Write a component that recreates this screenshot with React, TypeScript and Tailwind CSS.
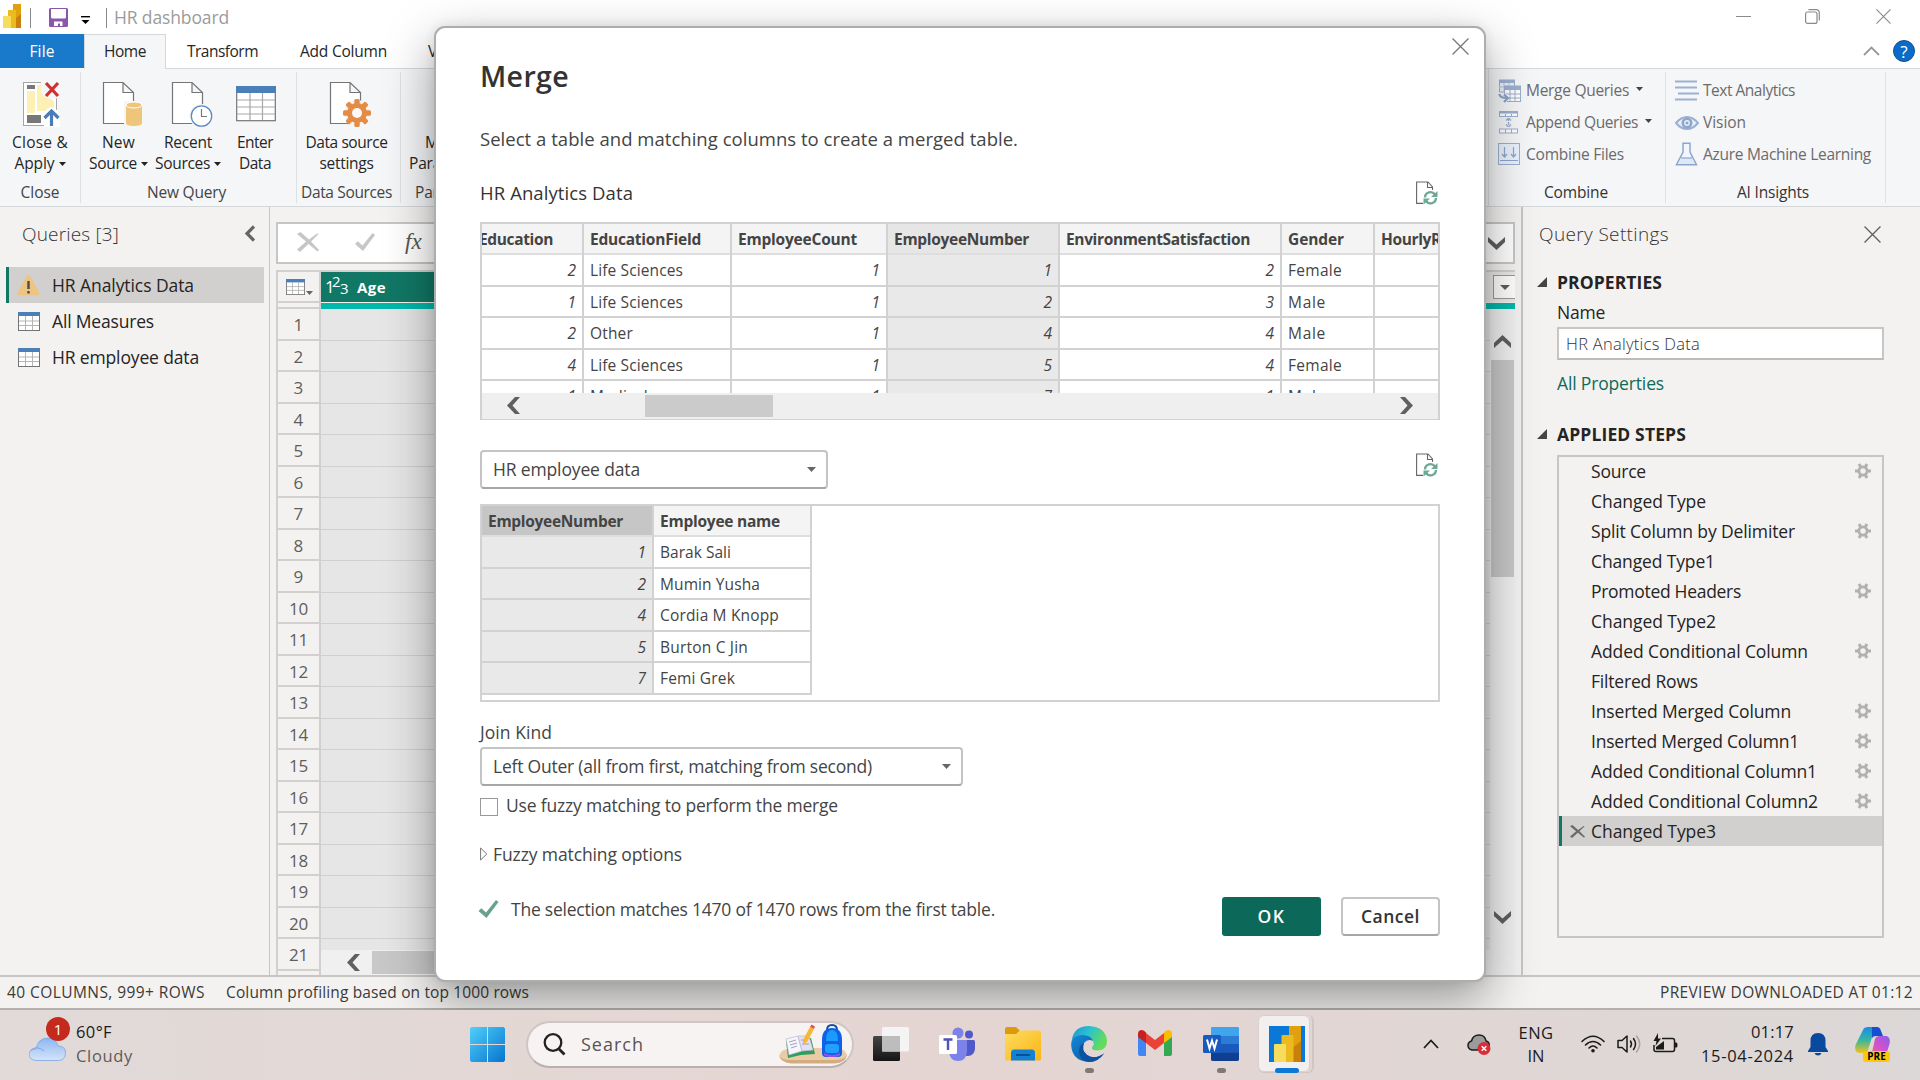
import React, { useLayoutEffect, useRef, useState } from "react";

/* Single-line label spaced out (or in) to fill a given width. */
function T({ w, className = "", children }: { w: number; className?: string; children: string }) {
  const ref = useRef<HTMLSpanElement>(null);
  const [spacing, setSpacing] = useState(0);
  useLayoutEffect(() => {
    if (ref.current) {
      setSpacing((w - ref.current.getBoundingClientRect().width) / children.length);
    }
  }, []);
  return (
    <span className={"block shrink-0 whitespace-nowrap " + className} style={{ width: w }}>
      <span ref={ref} className="inline-block" style={{ letterSpacing: spacing }}>
        {children}
      </span>
    </span>
  );
}

/* ---------- icons ---------- */

function PowerBiLogo({ className }: { className: string }) {
  return (
    <svg className={className} viewBox="0 0 18 24" preserveAspectRatio="none">
      <rect x="10" y="0" width="8" height="24" rx="0.6" fill="#c97f0a" />
      <path d="M10 0.600Q10 0 10.600 0H17.400Q18 0 18 0.600V10L13 14H10Z" fill="#e0a010" />
      <rect x="5" y="6" width="8" height="18" rx="0.6" fill="#ecb91e" />
      <rect x="0" y="12" width="8" height="12" rx="0.6" fill="#f8dc5c" />
    </svg>
  );
}

function SaveIcon() {
  return (
    <svg className="h-[19px] w-[19px]" viewBox="0 0 19 19">
      <path d="M0 1.5Q0 0 1.5 0H17.500Q19 0 19 1.500V17.500Q19 19 17.500 19H1.500Q0 19 0 17.500Z" fill="#8a56ac" />
      <path d="M2 1H17V9Q17 10.500 15.500 10.500H3.500Q2 10.500 2 9Z" fill="#fff" />
      <path d="M5 13.500H13.500V18H11V15.500H9V18H5Z" fill="#fff" />
    </svg>
  );
}

function Caret({ className = "text-[#222]" }: { className?: string }) {
  return (
    <svg className={"h-[4px] w-[7px] shrink-0 " + className} viewBox="0 0 7 4">
      <path d="M0 0H7L3.500 4Z" fill="currentColor" />
    </svg>
  );
}

function CloseApplyIcon() {
  return (
    <svg className="h-[46px] w-[40px]" viewBox="0 0 40 46">
      <rect x="3.500" y="1.500" width="33" height="43" fill="#fff" stroke="#a6a6a6" />
      <rect x="7" y="4" width="8" height="4" fill="#777" />
      <rect x="7" y="10" width="8" height="22" fill="#fdf0b4" />
      <rect x="7" y="34" width="14" height="8" fill="#777" />
      <path d="M17 4H25V14L34 20V30H17Z" fill="#fdf0b4" />
      <path d="M21 0H40V16Q32 20 25 16L21 12Z" fill="#f5f6f8" />
      <path d="M24 38Q24 28 31 26Q38 28 40 34V46H24Z" fill="#fff" />
      <path d="M26 2L38 15M38 2L26 15" stroke="#cf3030" strokeWidth="3.200" />
      <path d="M31.500 45V30M24.500 37L31.500 30L38.500 37" stroke="#4a7db8" strokeWidth="3.200" fill="none" />
    </svg>
  );
}

function Page() {
  return <path d="M1.500 1.500H21L31.500 11.500V42.500H1.500Z M21 1.500V11.500H31.500" fill="#fff" stroke="#757575" strokeWidth="1.200" />;
}

function NewSourceIcon() {
  return (
    <svg className="h-[46px] w-[42px]" viewBox="0 0 42 46">
      <Page />
      <path d="M22 20H42V45H22Z" fill="#f5f6f8" />
      <path d="M24 24V42Q24 45 32 45T40 42V24Z" fill="#eec579" />
      <ellipse cx="32" cy="24" rx="8" ry="3" fill="#eec579" stroke="#fff" strokeWidth="1" />
    </svg>
  );
}

function RecentIcon() {
  return (
    <svg className="h-[47px] w-[42px]" viewBox="0 0 42 47">
      <Page />
      <circle cx="30.500" cy="35" r="12" fill="#f5f6f8" />
      <circle cx="30.500" cy="35" r="10.200" fill="#fff" stroke="#5a8cc4" strokeWidth="1.300" />
      <path d="M30.500 28V35.500H36" stroke="#777" strokeWidth="1.200" fill="none" />
    </svg>
  );
}

function EnterDataIcon() {
  return (
    <svg className="h-[36px] w-[40px]" viewBox="0 0 40 36">
      <rect x="0.700" y="0.700" width="38.600" height="34" fill="#fff" stroke="#757575" strokeWidth="1.200" />
      <rect width="40" height="7" fill="#4a7fb8" />
      <path d="M1 14H39M1 21H39M1 28H39M14 7V34M26.500 7V34" stroke="#a8a8a8" strokeWidth="1.200" />
    </svg>
  );
}

function DataSourceIcon() {
  return (
    <svg className="h-[47px] w-[42px]" viewBox="0 0 42 47">
      <Page />
      <circle cx="28" cy="32" r="13" fill="#f5f6f8" />
      <g fill="#e58c44">
        {[0, 45, 90, 135].map((a) => (
          <rect key={a} x="25.300" y="18" width="5.400" height="28" rx="1.500" transform={`rotate(${a} 28 32)`} />
        ))}
        <circle cx="28" cy="32" r="10" />
      </g>
      <circle cx="28" cy="32" r="5" fill="#f9f9f9" />
    </svg>
  );
}

function MergeQueriesIcon() {
  return (
    <svg className="h-[24px] w-[23px]" viewBox="0 0 23 24">
      <path d="M1.500 1.500H16.500V13H1.500Z" fill="#e8f0fa" stroke="#9cb0cf" />
      <rect x="1" y="0.500" width="16" height="3.500" fill="#9cb0cf" />
      <path d="M1 8H7M6 4V13M11 4V8" stroke="#b9c8df" />
      <rect x="6.500" y="7" width="16" height="15.500" fill="#fff" stroke="#9cb0cf" />
      <rect x="6" y="7" width="17" height="4" fill="#9cb0cf" />
      <path d="M7 15H22M7 19H22M12 11V22M17 11V22" stroke="#9cb0cf" />
      <path d="M0 14L9 15V24H0Z" fill="#f2f4f6" />
      <path d="M1.500 15Q1.500 19 9 19M6 15.500L10 19L6 23" stroke="#8ba3c9" strokeWidth="2.200" fill="none" />
    </svg>
  );
}

function AppendQueriesIcon() {
  return (
    <svg className="ml-px h-[23px] w-[20px]" viewBox="0 0 20 23">
      <rect x="0.500" y="1" width="18" height="4.500" fill="#fff" stroke="#9cb0cf" />
      <rect x="0" y="0" width="19" height="2.500" fill="#9cb0cf" />
      <rect x="0.500" y="18" width="18" height="4" fill="#fff" stroke="#9cb0cf" />
      <path d="M6.500 3V5M12.500 3V5M6.500 18V22M12.500 18V22" stroke="#9cb0cf" />
      <path d="M9.500 7V16M7 9.500L9.500 7L12 9.500M7 13.500L9.500 16L12 13.500" stroke="#9cb0cf" strokeWidth="1.400" fill="none" strokeDasharray="3 1" />
    </svg>
  );
}

function CombineFilesIcon() {
  return (
    <svg className="h-[22px] w-[22px]" viewBox="0 0 22 22">
      <rect x="0.500" y="0.500" width="21" height="21" fill="#eaf2fd" stroke="#9cb0cf" />
      <path d="M6.500 4V14M4 11L6.500 14L9 11M15.500 4V14M13 11L15.500 14L18 11M2 17.500H20" stroke="#8fa6cb" strokeWidth="1.200" fill="none" />
    </svg>
  );
}

function TextLinesIcon() {
  return (
    <svg className="h-[22px] w-[24px]" viewBox="0 0 24 22">
      <path d="M0 1.500H22M0 7.500H22M3 13.500H24M0 19.500H22" stroke="#9cb0cf" strokeWidth="1.800" />
    </svg>
  );
}

function EyeIcon() {
  return (
    <svg className="h-[14px] w-[24px]" viewBox="0 0 24 14">
      <path d="M1 7Q6 1 12 1T23 7Q18 13 12 13T1 7Z" fill="#e6effa" stroke="#9cb0cf" strokeWidth="2" />
      <circle cx="12" cy="7" r="5.500" fill="#8fa6cb" />
      <circle cx="12" cy="7" r="2.900" fill="#e6effa" />
      <circle cx="12" cy="7" r="1.500" fill="#8fa6cb" />
    </svg>
  );
}

function FlaskIcon() {
  return (
    <svg className="h-[24px] w-[23px]" viewBox="0 0 23 24">
      <path d="M8 1.200H15V10L21.500 22.800H1.500L8 10Z" fill="#f1f6fd" stroke="#8fa6cb" strokeWidth="1.500" />
      <path d="M6 16H17L20 22H3Z" fill="#dde9f8" />
      <path d="M6 16H17" stroke="#8fa6cb" strokeWidth="1.200" />
    </svg>
  );
}

function TableIcon({ className = "h-[19px] w-[22px]" }: { className?: string }) {
  return (
    <svg className={"shrink-0 " + className} viewBox="0 0 22 19" preserveAspectRatio="none">
      <rect x="0.500" y="0.500" width="21" height="18" fill="#fff" stroke="#737373" />
      <path d="M1 9H21M1 13.500H21M7.500 4V18M14.500 4V18" stroke="#b5b5b5" />
      <rect width="22" height="4" fill="#4a7fb8" />
    </svg>
  );
}

function WarningIcon() {
  return (
    <svg className="h-[21px] w-[23px] shrink-0" viewBox="0 0 23 21">
      <path d="M9.500 1.500Q11.500 -1 13.500 1.500L22.500 18Q23 20.500 21 20.500H2Q0 20.500 0.500 18Z" fill="#edc481" />
      <path d="M11.500 6V14M11.500 16V18.500" stroke="#4c4c4c" strokeWidth="2.400" />
    </svg>
  );
}

/* Heavy angular chevron used by the scroll bars, drawn pointing left. */
function Chevron({ className = "" }: { className?: string }) {
  return (
    <svg className={"h-[17px] w-[13px] shrink-0 text-[#606060] " + className} viewBox="0 0 13 17">
      <path d="M8 0H13L5.500 8.500L13 17H8L0 8.500Z" fill="currentColor" />
    </svg>
  );
}

function ThinX({ className }: { className: string }) {
  return (
    <svg className={className} viewBox="0 0 16 16">
      <path d="M0.500 0.500L15.500 15.500M15.500 0.500L0.500 15.500" stroke="currentColor" strokeWidth="1.200" fill="none" />
    </svg>
  );
}

function BrushX({ className }: { className: string }) {
  return (
    <svg className={className} viewBox="0 0 22 20" preserveAspectRatio="none">
      <path d="M0 2L3.500 0L12 7.500L20 1.500L21.500 2L14 9.500L22 18L20.500 19.500L11.500 12L3 20L0 17.500L9 9.500Z" fill="currentColor" />
    </svg>
  );
}

function CheckMark({ className }: { className: string }) {
  return (
    <svg className={className} viewBox="0 0 20 18">
      <path d="M0 11L2.800 8.200L7.500 12.500L17.500 0L20 2L8 18Z" fill="currentColor" />
    </svg>
  );
}

function GearIcon() {
  return (
    <svg className="h-[16px] w-[16px] shrink-0" viewBox="0 0 16 16">
      <g fill="#b3b1af">
        {[0, 60, 120].map((a) => (
          <rect key={a} x="0" y="6.500" width="16" height="3" transform={`rotate(${a} 8 8)`} />
        ))}
        <circle cx="8" cy="8" r="5.500" />
      </g>
      <circle cx="8" cy="8" r="2.700" fill="#f3f2f1" />
    </svg>
  );
}

function RefreshPageIcon() {
  return (
    <svg className="h-[24px] w-[22px]" viewBox="0 0 22 24">
      <path d="M0.600 1H12L16.500 6V22H0.600Z" fill="#fff" />
      <path d="M7 22.400H0.600V1H12L16.500 6V9M11.500 1V6.500H16.500" fill="none" stroke="#666" strokeWidth="1.100" />
      <circle cx="14.500" cy="16.800" r="7.300" fill="#fff" />
      <path d="M9 16.500A5.500 5.500 0 0 1 19 13.500M20 17A5.500 5.500 0 0 1 10 20" fill="none" stroke="#6fa894" strokeWidth="2.400" />
      <path d="M21.500 10V16H15ZM7.500 23.500V17.500H14Z" fill="#6fa894" />
    </svg>
  );
}

/* ---------- ribbon ---------- */

function BigButton({ className, icon, children }: { className: string; icon: React.ReactNode; children: React.ReactNode }) {
  return (
    <div className={"flex shrink-0 flex-col items-center " + className}>
      <div className="mb-[3px] flex h-[50px] items-center justify-center">{icon}</div>
      {children}
    </div>
  );
}

function Line({ children }: { children: React.ReactNode }) {
  return <div className="flex h-[21px] items-center justify-center gap-[4px]">{children}</div>;
}

function SmallItem({ icon, w, text, caret }: { icon: React.ReactNode; w: number; text: string; caret?: boolean }) {
  return (
    <div className="flex h-[32px] items-center">
      <div className="flex w-[28px] shrink-0 items-center">{icon}</div>
      <T w={w} className="text-[#6b6b6b]">{text}</T>
      {caret && <Caret className="-mt-[3px] ml-[7px] text-[#444]" />}
    </div>
  );
}

function Ribbon() {
  return (
    <div className="flex h-[138px] border-b border-[#d5d8db] bg-[#f5f6f8] text-[15.5px] leading-[21px] text-[#262626]">
      <div className="my-[3px] flex w-[81px] flex-col items-center border-r border-[#dfe0e2] pt-[7px]">
        <BigButton className="pl-0" icon={<CloseApplyIcon />}>
          <Line><T w={56}>Close &amp;</T></Line>
          <Line><T w={40}>Apply</T><Caret /></Line>
        </BigButton>
        <div className="mt-[8px]"><T w={39} className="text-[#444]">Close</T></div>
      </div>
      <div className="my-[3px] w-[216px] border-r border-[#dfe0e2] pt-[7px]">
        <div className="flex">
          <BigButton className="ml-[8px] w-[59px]" icon={<div className="pl-[9px]"><NewSourceIcon /></div>}>
            <Line><T w={33}>New</T></Line>
            <Line><T w={48}>Source</T><Caret /></Line>
          </BigButton>
          <BigButton className="ml-[7px] w-[66px]" icon={<div className="pl-[8px]"><RecentIcon /></div>}>
            <Line><T w={48}>Recent</T></Line>
            <Line><T w={55}>Sources</T><Caret /></Line>
          </BigButton>
          <BigButton className="ml-[15px] w-[40px]" icon={<EnterDataIcon />}>
            <div className="-ml-[2px]">
              <Line><T w={36}>Enter</T></Line>
              <Line><T w={32}>Data</T></Line>
            </div>
          </BigButton>
        </div>
        <div className="mt-[8px] pl-[66px]"><T w={79} className="text-[#444]">New Query</T></div>
      </div>
      <div className="my-[3px] flex w-[104px] flex-col items-center border-r border-[#dfe0e2] pt-[7px] pr-[4px]">
        <BigButton className="w-[84px]" icon={<div className="pl-[7px]"><DataSourceIcon /></div>}>
          <Line><T w={82}>Data source</T></Line>
          <Line><T w={54}>settings</T></Line>
        </BigButton>
        <div className="mt-[8px]"><T w={91} className="text-[#444]">Data Sources</T></div>
      </div>
      <div className="flex w-[1088px] flex-col border-r border-[#dfe0e2] pt-[10px]">
        <div className="h-[53px]" />
        <div className="pl-[24px]"><T w={56}>Manage</T></div>
        <div className="pl-[8px]"><T w={82}>Parameters</T></div>
        <div className="mt-[8px] pl-[14px]"><T w={82} className="text-[#444]">Parameters</T></div>
      </div>
      <div className="my-[3px] flex w-[177px] flex-col border-r border-[#dfe0e2] pt-[3px] pl-[9px]">
        <SmallItem icon={<MergeQueriesIcon />} w={103} text="Merge Queries" caret />
        <SmallItem icon={<AppendQueriesIcon />} w={112} text="Append Queries" caret />
        <SmallItem icon={<CombineFilesIcon />} w={98} text="Combine Files" />
        <div className="mt-[12px] pl-[46px]"><T w={64} className="text-[#333]">Combine</T></div>
      </div>
      <div className="my-[3px] flex w-[220px] flex-col border-r border-[#dfe0e2] pt-[3px] pl-[9px]">
        <SmallItem icon={<TextLinesIcon />} w={92} text="Text Analytics" />
        <SmallItem icon={<EyeIcon />} w={43} text="Vision" />
        <SmallItem icon={<FlaskIcon />} w={168} text="Azure Machine Learning" />
        <div className="mt-[12px] pl-[62px]"><T w={72} className="text-[#333]">AI Insights</T></div>
      </div>
    </div>
  );
}

function TitleBar() {
  return (
    <div className="flex h-[34px] shrink-0 items-start bg-white">
      <PowerBiLogo className="mt-[4px] ml-[3px] h-[24px] w-[18px]" />
      <div className="mt-[8px] ml-[9px] h-[20px] w-px bg-[#8a8a8a]" />
      <div className="mt-[8px] ml-[18px]"><SaveIcon /></div>
      <svg className="mt-[16px] ml-[13px] h-[8px] w-[9px]" viewBox="0 0 9 8">
        <path d="M0 0.700H9" stroke="#000" strokeWidth="1.400" />
        <path d="M0.500 4H8.500L4.500 8Z" />
      </svg>
      <div className="mt-[8px] ml-[16px] h-[20px] w-px bg-[#8a8a8a]" />
      <T w={115} className="mt-[4px] ml-[7px] text-[17.5px] leading-[27px] text-[#9b9b9b]">HR dashboard</T>
      <div className="grow" />
      <div className="mt-[16px] mr-[54px] h-px w-[15px] bg-[#8a8a8a]" />
      <svg className="mt-[9px] mr-[56px] h-[15px] w-[15px]" viewBox="0 0 15 15" fill="none" stroke="#8a8a8a" strokeWidth="1.200">
        <rect x="0.600" y="3" width="11.400" height="11.400" rx="2" />
        <path d="M3.500 0.700H11Q14.300 0.700 14.300 4V11.500" />
      </svg>
      <ThinX className="mt-[9px] mr-[29px] h-[15px] w-[15px] text-[#8a8a8a]" />
    </div>
  );
}

function TabBar() {
  return (
    <div className="flex h-[35px] shrink-0 bg-white text-[15.5px] leading-[35px] text-[#262626]">
      <div className="flex h-[34px] w-[84px] justify-center bg-[#1979ca] text-white"><T w={25}>File</T></div>
      <div className="flex w-[82px] justify-center border border-b-0 border-[#d5d8db] bg-[#f5f6f8] leading-[33px]"><T w={42}>Home</T></div>
      <div className="flex grow border-b border-[#d5d8db]">
        <T w={71} className="ml-[21px]">Transform</T>
        <T w={87} className="ml-[42px]">Add Column</T>
        <T w={34} className="ml-[41px]">View</T>
        <div className="grow" />
        <svg className="mt-[12px] mr-[13px] h-[10px] w-[17px]" viewBox="0 0 17 10" fill="none" stroke="#999" strokeWidth="1.800">
          <path d="M1 9L8.500 1.500L16 9" />
        </svg>
        <div className="mt-[6px] mr-[5px] flex h-[22px] w-[22px] items-center justify-center rounded-full border border-[#0f4f8f] bg-[#0a6bc8] text-[17px] text-white">?</div>
      </div>
    </div>
  );
}

/* ---------- panes ---------- */

function QueriesPane() {
  return (
    <div className="w-[270px] shrink-0 border-r border-[#c8c6c4] text-[17.5px] text-[#252423]">
      <div className="mb-[4px] flex h-[56px] items-center pl-[22px] text-[19px] font-light text-[#333]">
        <T w={97} className="-mt-px">Queries [3]</T>
        <svg className="-mt-[3px] ml-[125px] h-[17px] w-[11px]" viewBox="0 0 11 17"><path d="M10 1.500L3 8.500L10 15.500" fill="none" stroke="#666" strokeWidth="3.200" /></svg>
      </div>
      <div className="ml-[6px] flex h-[36px] w-[258px] items-center border-l-[3px] border-[#117865] bg-[#d2d0ce] pl-[8px]">
        <WarningIcon />
        <T w={142} className="ml-[12px]">HR Analytics Data</T>
      </div>
      <div className="flex h-[36px] items-center pl-[18px]">
        <TableIcon />
        <T w={102} className="ml-[12px]">All Measures</T>
      </div>
      <div className="flex h-[36px] items-center pl-[18px]">
        <TableIcon />
        <T w={147} className="ml-[12px]">HR employee data</T>
      </div>
    </div>
  );
}

const rowNumbers = Array.from({ length: 21 }, (_, i) => i + 1);

function DataGrid() {
  return (
    <div className="w-[1251px] shrink-0 overflow-hidden pt-[15px] pl-[6px]">
      <div className="flex h-[42px] w-[1239px] items-center border-2 border-[#c8c6c4] bg-white">
        <BrushX className="-mt-[2px] ml-[19px] h-[20px] w-[22px] text-[#c8c6c4]" />
        <CheckMark className="-mt-[2px] ml-[36px] h-[18px] w-[20px] text-[#c8c6c4]" />
        <span className="-mt-[2px] ml-[30px] font-['Liberation_Serif'] text-[23px] text-[#555] italic">fx</span>
        <div className="grow" />
        <Chevron className="mr-[10px] -rotate-90" />
      </div>
      <div className="mt-[6px] flex h-[705px] w-[1239px] border-t-2 border-[#d2d0ce]">
        <div className="w-[45px] shrink-0 border-x-2 border-[#d2d0ce] text-[17px] text-[#605e5c]">
          <div className="flex h-[31px] items-center border-b-2 border-[#d2d0ce] pl-[8px]">
            <TableIcon className="h-[16px] w-[19px]" />
            <Caret className="mt-[12px] ml-px text-[#666]" />
          </div>
          <div className="h-[6px] border-b-2 border-[#d2d0ce]" />
          {rowNumbers.map((n) => (
            <div key={n} className="flex h-[31px] items-center justify-center border-b-2 border-[#d2d0ce] pt-[2px] odd:h-[32px]">
              <T w={n < 10 ? 10 : 19}>{String(n)}</T>
            </div>
          ))}
        </div>
        <div className="w-[1194px]">
          <div className="flex h-[30px] items-center bg-[#117865] font-bold text-white">
            <div className="ml-[4px] flex text-[17px] leading-none font-normal">
              <T w={7}>1</T><T w={8} className="-mt-[4px] text-[15px]">2</T><T w={8} className="mt-[3px] text-[15px]">3</T>
            </div>
            <T w={29} className="ml-[9px] text-[15px]">Age</T>
            <div className="grow" />
            <div className="flex h-full w-[60px] items-center justify-end bg-[#eceae9]">
              <div className="flex h-[24px] w-[22px] items-center justify-center border border-r-0 border-[#9b9b9b] bg-white">
                <svg className="h-[5px] w-[10px]" viewBox="0 0 10 5"><path d="M0 0H10L5 5Z" fill="#605e5c" /></svg>
              </div>
            </div>
          </div>
          <div className="mt-px h-[6px] bg-[#01b8aa]" />
          <div className="flex h-[641px]">
            <div className="w-[1169px] overflow-hidden bg-[#e6e6e6]">
              {rowNumbers.map((n) => (
                <div key={n} className="h-[31px] border-b border-[#d2d0ce] odd:h-[32px]" />
              ))}
            </div>
            <div className="flex grow flex-col items-center bg-[#f0f0f0]">
              <Chevron className="mt-[24px] rotate-90" />
              <div className="mt-[10px] h-[217px] w-[23px] bg-[#c8c8c8]" />
              <div className="grow" />
              <Chevron className="mb-[24px] -rotate-90" />
            </div>
          </div>
          <div className="flex h-[25px] items-center bg-[#f0f0f0]">
            <Chevron className="ml-[26px]" />
            <div className="ml-[12px] h-[23px] w-[500px] bg-[#c8c8c8]" />
          </div>
        </div>
      </div>
    </div>
  );
}

const steps: { name: string; w: number; gear?: boolean; selected?: boolean }[] = [
  { name: "Source", w: 55, gear: true },
  { name: "Changed Type", w: 115 },
  { name: "Split Column by Delimiter", w: 204, gear: true },
  { name: "Changed Type1", w: 124 },
  { name: "Promoted Headers", w: 150, gear: true },
  { name: "Changed Type2", w: 125 },
  { name: "Added Conditional Column", w: 217, gear: true },
  { name: "Filtered Rows", w: 107 },
  { name: "Inserted Merged Column", w: 200, gear: true },
  { name: "Inserted Merged Column1", w: 208, gear: true },
  { name: "Added Conditional Column1", w: 226, gear: true },
  { name: "Added Conditional Column2", w: 227, gear: true },
  { name: "Changed Type3", w: 125, selected: true },
];

function SectionTitle({ w, children }: { w: number; children: string }) {
  return (
    <div className="flex h-[42px] items-center pl-[14px] font-bold">
      <svg className="mr-[10px] h-[10px] w-[10px]" viewBox="0 0 10 10"><path d="M10 0V10H0Z" fill="#444" /></svg>
      <T w={w}>{children}</T>
    </div>
  );
}

function SettingsPane() {
  return (
    <div className="grow border-l-2 border-[#c8c6c4] text-[17.5px] text-[#252423]">
      <div className="flex h-[54px] items-center pl-[16px] text-[19px] font-light text-[#333]">
        <T w={130}>Query Settings</T>
        <ThinX className="ml-[195px] h-[17px] w-[17px] text-[#605e5c]" />
      </div>
      <SectionTitle w={105}>PROPERTIES</SectionTitle>
      <div className="h-[18px] pl-[34px] leading-[18px]"><T w={48}>Name</T></div>
      <div className="mt-[6px] ml-[34px] flex h-[33px] w-[327px] items-center border-2 border-[#c8c6c4] border-b-[#bdbbb9] bg-white pt-[2px] pl-[7px] text-[16.500px] font-light text-[#333]">
        <T w={134}>HR Analytics Data</T>
      </div>
      <div className="flex h-[46px] items-center pl-[34px] text-[#0f6b58]"><T w={107}>All Properties</T></div>
      <div className="h-[7px]" />
      <SectionTitle w={129}>APPLIED STEPS</SectionTitle>
      <div className="ml-[34px] h-[483px] w-[327px] border-2 border-[#c8c6c4]">
        <div className="-mt-px">
          {steps.map((s) =>
            s.selected ? (
              <div key={s.name} className="flex h-[30px] items-center border-l-[3px] border-[#117865] bg-[#d2d0ce] pl-[8px]">
                <BrushX className="mr-[6px] h-[13px] w-[15px] text-[#6d6b69]" />
                <T w={s.w}>{s.name}</T>
              </div>
            ) : (
              <div key={s.name} className="flex h-[30px] items-center justify-between pr-[11px] pl-[32px]">
                <T w={s.w}>{s.name}</T>
                {s.gear && <div className="-mt-px"><GearIcon /></div>}
              </div>
            )
          )}
        </div>
      </div>
    </div>
  );
}

function StatusBar() {
  return (
    <div className="flex h-[35px] shrink-0 items-center border-y-2 border-t-[#c8c6c4] border-b-[#b3b0ae] bg-[#f3f2f1] pr-[7px] pl-[7px] text-[15.500px] text-[#3b3a39]">
      <T w={198}>40 COLUMNS, 999+ ROWS</T>
      <T w={303} className="ml-[21px]">Column profiling based on top 1000 rows</T>
      <div className="grow" />
      <T w={253}>PREVIEW DOWNLOADED AT 01:12</T>
    </div>
  );
}

/* ---------- merge dialog ---------- */

const rowHeights = ["h-[32px]", "h-[31px]", "h-[32px]", "h-[31px]", "h-[32px]"];

type Column = { title: string; titleWidth: number; width: string; numeric?: boolean; picked?: boolean; first?: boolean; last?: boolean; cells: string[]; cellWidths?: number[] };

const sourceColumns: Column[] = [
  { title: "Education", titleWidth: 74, width: "w-[102px]", numeric: true, first: true, cells: ["2", "1", "2", "4", "1"] },
  { title: "EducationField", titleWidth: 111, width: "w-[148px]", cells: ["Life Sciences", "Life Sciences", "Other", "Life Sciences", "Medical"], cellWidths: [93, 93, 43, 93, 58] },
  { title: "EmployeeCount", titleWidth: 119, width: "w-[156px]", numeric: true, cells: ["1", "1", "1", "1", "1"] },
  { title: "EmployeeNumber", titleWidth: 135, width: "w-[172px]", numeric: true, picked: true, cells: ["1", "2", "4", "5", "7"] },
  { title: "EnvironmentSatisfaction", titleWidth: 184, width: "w-[222px]", numeric: true, cells: ["2", "3", "4", "4", "1"] },
  { title: "Gender", titleWidth: 56, width: "w-[93px]", cells: ["Female", "Male", "Male", "Female", "Male"], cellWidths: [54, 38, 38, 54, 38] },
  { title: "HourlyRate", titleWidth: 84, width: "w-[63px]", last: true, cells: ["", "", "", "", ""] },
];

const lookupColumns: Column[] = [
  { title: "EmployeeNumber", titleWidth: 135, width: "w-[172px]", numeric: true, picked: true, cells: ["1", "2", "4", "5", "7"] },
  { title: "Employee name", titleWidth: 120, width: "w-[158px]", cells: ["Barak Sali", "Mumin Yusha", "Cordia M Knopp", "Burton C Jin", "Femi Grek"], cellWidths: [71, 100, 119, 88, 75] },
];

function PreviewColumn({ col, pickedHead }: { col: Column; pickedHead: string }) {
  return (
    <div className={"shrink-0 overflow-hidden border-[#d2d2d2] " + col.width + (col.last ? "" : " border-r-2") + (col.picked ? " bg-[#e9e9e9]" : " bg-white")}>
      <div className={"flex h-[31px] items-center border-b-2 border-[#dedede] pt-[2px] font-bold " + (col.first ? "-ml-[3px] " : "pl-[6px] ") + (col.picked ? pickedHead : "bg-[#f4f4f4]")}>
        <T w={col.titleWidth}>{col.title}</T>
      </div>
      {col.cells.map((c, i) => (
        <div key={i} className={"flex items-center border-b-2 border-[#d2d2d2] pt-[2px] " + rowHeights[i] + (col.numeric ? " justify-end pr-[6px] italic" : " pl-[6px]")}>
          {col.cellWidths ? <T w={col.cellWidths[i]}>{c}</T> : c}
        </div>
      ))}
    </div>
  );
}

function Select({ className, w, children }: { className: string; w: number; children: string }) {
  return (
    <div className={"flex h-[39px] items-center justify-between rounded-[4px] border-2 border-[#c4c4c4] border-b-[#a6a6a6] bg-white pr-[10px] pl-[11px] " + className}>
      <T w={w} className="-mt-px">{children}</T>
      <svg className="h-[5px] w-[9px]" viewBox="0 0 9 5"><path d="M0 0H9L4.500 5Z" fill="#666" /></svg>
    </div>
  );
}

function MergeDialog() {
  return (
    <div className="absolute top-[26px] left-[434px] h-[956px] w-[1052px] rounded-[11px] border-2 border-[#adadad] bg-white pt-[28px] pr-[44px] pl-[44px] text-[17.5px] text-[#444] shadow-[0_18px_50px_rgba(0,0,0,0.38),0_0_12px_rgba(0,0,0,0.08)]">
      <ThinX className="absolute top-[10px] right-[15px] h-[17px] w-[17px] text-[#777]" />
      <div className="h-[40px] text-[28.5px] leading-[41px] font-semibold text-[#333]"><T w={89}>Merge</T></div>
      <div className="mt-[29px] h-[28px] text-[18.5px] leading-[28px]"><T w={538}>Select a table and matching columns to create a merged table.</T></div>
      <div className="mt-[26px] flex h-[28px] items-center justify-between pr-[2px] text-[18.5px] text-[#333]">
        <T w={153}>HR Analytics Data</T>
        <div className="-mt-px"><RefreshPageIcon /></div>
      </div>
      <div className="mt-[15px] h-[198px] w-[960px] border-2 border-b border-[#d2d2d2] text-[15.5px]">
        <div className="flex h-[169px] overflow-hidden">
          {sourceColumns.map((c) => <PreviewColumn key={c.title} col={c} pickedHead="bg-[#e6e6e6]" />)}
        </div>
        <div className="flex h-[26px] items-center bg-[#efefef]">
          <Chevron className="-mt-px ml-[25px]" />
          <div className="ml-[125px] h-[22px] w-[128px] bg-[#cbcbcb]" />
          <div className="grow" />
          <Chevron className="-mt-px mr-[25px] rotate-180" />
        </div>
      </div>
      <div className="mt-[30px] flex items-start justify-between pr-[2px]">
        <Select className="w-[348px]" w={147}>HR employee data</Select>
        <div className="mt-[3px]"><RefreshPageIcon /></div>
      </div>
      <div className="mt-[15px] flex h-[198px] w-[960px] items-start border-2 border-[#d2d2d2] text-[15.5px]">
        {lookupColumns.map((c) => <PreviewColumn key={c.title} col={c} pickedHead="bg-[#c6c6c6]" />)}
      </div>
      <div className="mt-[18px] h-[24px] leading-[24px]"><T w={72}>Join Kind</T></div>
      <Select className="mt-[3px] w-[483px]" w={379}>Left Outer (all from first, matching from second)</Select>
      <div className="mt-[12px] flex h-[18px] items-center">
        <div className="h-[18px] w-[18px] border border-[#999]" />
        <T w={332} className="-mt-[4px] ml-[8px]">Use fuzzy matching to perform the merge</T>
      </div>
      <div className="mt-[26px] flex h-[24px] items-center">
        <svg className="h-[14px] w-[8px]" viewBox="0 0 8 14"><path d="M0.600 1V13L6.800 7Z" fill="none" stroke="#777" /></svg>
        <T w={189} className="ml-[5px]">Fuzzy matching options</T>
      </div>
      <div className="mt-[31px] flex h-[39px] items-start">
        <div className="flex h-[24px] items-center">
          <CheckMark className="-ml-[2px] h-[18px] w-[21px] text-[#66a28d]" />
          <T w={484} className="ml-[12px]">The selection matches 1470 of 1470 rows from the first table.</T>
        </div>
        <div className="grow" />
        <div className="flex h-[39px] w-[99px] items-center justify-center rounded-[3px] bg-[#0c695a] font-semibold text-white"><T w={28}>OK</T></div>
        <div className="ml-[20px] flex h-[39px] w-[99px] items-center justify-center rounded-[4px] border-2 border-[#c4c4c4] border-b-[#a6a6a6] font-semibold text-[#333]"><T w={59}>Cancel</T></div>
      </div>
    </div>
  );
}

/* ---------- taskbar ---------- */

function Taskbar() {
  return (
    <div className="relative z-10 flex h-[70px] shrink-0 items-center bg-linear-to-r from-[#e1dad8] via-[#e5d5d2] to-[#dcd8d7] pb-[2px] text-[16.5px] leading-[24px] text-[#1b1b1b]">
      <div className="relative -mt-px ml-[29px] h-[36px] w-[40px]">
        <svg className="mt-[11px] h-[24px] w-[37px]" viewBox="0 0 37 24">
          <defs>
            <linearGradient id="cloud" x1="0" y1="0" x2="0" y2="1"><stop offset="0" stopColor="#8db6f2" /><stop offset="1" stopColor="#d5e4f8" /></linearGradient>
          </defs>
          <path d="M7 12Q9 1 19 1Q27 1 29 9Q37 9 36.500 16.500Q36 23.500 29 23.500H7Q0 23 0 17Q0 12 7 12Z" fill="url(#cloud)" stroke="#7ba4e6" strokeWidth="0.800" />
          <path d="M2 13Q8 8 15 14" stroke="#7ba4e6" fill="none" />
        </svg>
        <div className="absolute -top-[9px] left-[17px] flex h-[24px] w-[24px] items-center justify-center rounded-full bg-[#c42b1c] text-[15px] text-white">1</div>
      </div>
      <div className="-mt-px ml-[7px] w-[58px]">
        <T w={36}>60°F</T>
        <T w={57} className="text-[#5f5b5a]">Cloudy</T>
      </div>

      <svg className="ml-[336px] h-[35px] w-[35px]" viewBox="0 0 35 35">
        <defs>
          <linearGradient id="win" x1="0" y1="0" x2="1" y2="1"><stop offset="0" stopColor="#4fd0fb" /><stop offset="1" stopColor="#0674cf" /></linearGradient>
        </defs>
        <path d="M1.500 0H17V17H0V1.500ZM18 0H33.500L35 1.500V17H18ZM0 18H17V35H1.500L0 33.500ZM18 18H35V33.500L33.500 35H18Z" fill="url(#win)" />
      </svg>

      <div className="ml-[21px] flex h-[47px] w-[328px] items-center rounded-full border-2 border-[#cfc5c3] border-b-[#b9afad] bg-[#f7f3f2]">
        <svg className="ml-[15px] h-[23px] w-[23px]" viewBox="0 0 23 23" fill="none" stroke="#222" strokeWidth="2.300">
          <circle cx="10" cy="9.500" r="8.300" />
          <path d="M15.500 15.500L21.500 21.500" strokeWidth="2.800" />
        </svg>
        <T w={63} className="ml-[15px] text-[18px] text-[#575453]">Search</T>
        <svg className="ml-[135px] h-[40px] w-[68px]" viewBox="0 0 68 40">
          <path d="M0 32Q2 25 12 24H58Q66 25 68 31Q66 38 56 39H12Q3 38 0 32Z" fill="#e9cba6" />
          <path d="M0 32Q3 36 12 36H56Q65 36 68 31Q66 39 56 39.500H12Q3 39 0 32Z" fill="#d3ad80" />
          <path d="M7 17L19 13L32 14L36 30L22 31L9 34Z" fill="#2f9e5b" />
          <path d="M7 15L19 12L23 27L10 31Z" fill="#f5f5fb" stroke="#bbb9d0" strokeWidth="0.700" />
          <path d="M19 12L30 12L34 26L23 27Z" fill="#e3e1f1" stroke="#bbb9d0" strokeWidth="0.700" />
          <path d="M10 18L17 16M11 21L18 19M12 24L18 22M22 16H29M23 20H30" stroke="#8f8cab" strokeWidth="0.800" />
          <path d="M24 16L31 3L35 5L28 18L24 20Z" fill="#f7b733" />
          <path d="M31 3L32.500 0.500L36 2.500L35 5Z" fill="#e2574c" />
          <path d="M48 6Q48 1 53 1T58 6" fill="none" stroke="#174ea6" strokeWidth="2" />
          <path d="M43 16Q43 4 53 4T63 16V29Q63 33 59 33H47Q43 33 43 29Z" fill="#0d62e8" />
          <path d="M47 17Q47 6 53 6T59 17Z" fill="#1c9bff" />
          <rect x="46" y="20" width="14" height="9" rx="3" fill="#22a0ff" />
          <path d="M45 29Q53 33 61 29V31Q59 33 53 33T45 31Z" fill="#9a4fe0" />
        </svg>
      </div>

      <svg className="ml-[19px] h-[36px] w-[36px]" viewBox="0 0 36 36">
        <defs>
          <linearGradient id="tv" x1="0" y1="0" x2="0" y2="1"><stop offset="0" stopColor="#454545" /><stop offset="1" stopColor="#151515" /></linearGradient>
        </defs>
        <rect x="0" y="10" width="27" height="25" rx="1.500" fill="url(#tv)" />
        <rect x="9" y="1" width="27" height="24.500" rx="1.500" fill="#f4f4f4" />
        <rect x="9" y="10" width="18" height="15.500" fill="#bdbdbd" />
      </svg>

      <svg className="ml-[30px] h-[36px] w-[36px]" viewBox="0 0 36 36">
        <circle cx="19" cy="7" r="5.500" fill="#7b83eb" />
        <circle cx="30" cy="8.500" r="4" fill="#5059c9" />
        <path d="M25 14H34.500Q36 14 36 16V23Q35 30 29 30H25Z" fill="#5059c9" />
        <path d="M10 14H28V26Q27 35 19 35T10 26Z" fill="#7b83eb" />
        <rect x="0" y="9" width="18" height="19" rx="1.500" fill="#fff" />
        <path d="M4.500 13.500H13.500M9 13.500V24" stroke="#4b53bc" strokeWidth="2.400" fill="none" />
      </svg>

      <svg className="ml-[30px] h-[36px] w-[36px]" viewBox="0 0 36 36">
        <defs>
          <linearGradient id="fold" x1="0" y1="0" x2="1" y2="1"><stop offset="0" stopColor="#ffdc5e" /><stop offset="1" stopColor="#f9b516" /></linearGradient>
        </defs>
        <path d="M0 3Q0 1 2 1H11L15 5V10H0Z" fill="#dd9a0a" />
        <path d="M0 8H11L15 4.500H34Q36 4.500 36 6.500V33Q36 34.500 34 34.500H2Q0 34.500 0 33Z" fill="url(#fold)" />
        <path d="M6 34.500V27Q6 23.500 9 23.500H27Q30 23.500 30 27V34.500Z" fill="#1281d4" />
        <path d="M11 29H25" stroke="#0a4f94" strokeWidth="2" />
      </svg>

      <div className="relative ml-[30px] h-[36px] w-[36px]">
        <svg className="h-[36px] w-[36px]" viewBox="0 0 36 36">
          <defs>
            <linearGradient id="edgeA" x1="0" y1="0" x2="1" y2="0.400"><stop offset="0" stopColor="#1b8fd6" /><stop offset="0.500" stopColor="#2bc2cf" /><stop offset="1" stopColor="#63dd58" /></linearGradient>
            <linearGradient id="edgeB" x1="0" y1="0" x2="1" y2="1"><stop offset="0" stopColor="#1389d8" /><stop offset="1" stopColor="#0c4f9b" /></linearGradient>
          </defs>
          <path d="M0.500 16Q2 0 18 0Q35 1 36 15Q36 24 27 24.500Q20 24.500 21 21Q24 19 22 15Q18 10 12 12Q4 14 0.500 20Z" fill="url(#edgeA)" />
          <path d="M0.200 19Q1 9 11 9Q20 9 22 15Q17 12 13 17Q10 24 16 29Q24 34 33 27.500Q27 36 18 36Q1 35 0.200 19Z" fill="url(#edgeB)" />
          <path d="M13 17Q10 24 16 29Q24 34 33 27.500Q27 36 18 36Q8 34 8 25Q8 19 13 17Z" fill="#0c52a0" />
        </svg>
        <div className="absolute top-[42px] left-[14px] h-[5px] w-[9px] rounded-full bg-[#7e7876]" />
      </div>

      <svg className="-mt-[3px] ml-[31px] h-[26px] w-[34px]" viewBox="0 0 34 26">
        <path d="M0 4V24Q0 26 2 26H8V10Z" fill="#4285f4" />
        <path d="M34 4V24Q34 26 32 26H26V10Z" fill="#34a853" />
        <path d="M8 3L17 10L26 3V13L17 20L8 13Z" fill="#ea4335" />
        <path d="M0 4Q0 0 4 0Q6 0 8 2.500V13L0 7Z" fill="#c5221f" />
        <path d="M34 4Q34 0 30 0Q28 0 26 2.500V13L34 7Z" fill="#fbbc04" />
      </svg>

      <div className="relative ml-[31px] h-[36px] w-[36px]">
        <svg className="h-[36px] w-[36px]" viewBox="0 0 36 36">
          <rect x="8" y="1" width="28" height="34" rx="2" fill="#2b7cd3" />
          <path d="M8 3Q8 1 10 1H34Q36 1 36 3V10H8Z" fill="#41a5ee" />
          <rect x="8" y="18" width="28" height="8.500" fill="#185abd" />
          <path d="M8 26.500H36V33Q36 35 34 35H10Q8 35 8 33Z" fill="#103f91" />
          <rect x="0" y="9" width="18" height="18" rx="1.500" fill="#185abd" />
          <path d="M4 13.500L6.500 22.500L9 14.500L11.500 22.500L14 13.500" stroke="#fff" strokeWidth="2" fill="none" />
        </svg>
        <div className="absolute top-[42px] left-[14px] h-[5px] w-[9px] rounded-full bg-[#7e7876]" />
      </div>

      <div className="ml-[19px] h-[58px] w-[56px] rounded-[6px] border-r-2 border-b border-[#cfc5c3] pr-[2px]">
        <div className="relative h-[57px] w-[52px] rounded-[6px] border border-[#d8d0ce] bg-[#f3efee]">
          <div className="mt-[10px] ml-[10px] flex h-[36px] w-[36px] items-center justify-center bg-[#0a78d6]">
            <PowerBiLogo className="h-[36px] w-[27px]" />
          </div>
          <div className="absolute top-[52px] left-[16px] h-[5px] w-[24px] rounded-full bg-[#0a78d6]" />
        </div>
      </div>

      <svg className="ml-[109px] h-[10px] w-[16px]" viewBox="0 0 16 10" fill="none" stroke="#1b1b1b" strokeWidth="1.700"><path d="M1 9L8 1.500L15 9" /></svg>

      <svg className="ml-[28px] h-[21px] w-[24px]" viewBox="0 0 24 21">
        <path d="M4.500 7Q6 1 12 1Q18 1 19 7Q23 8 22 13L10 16H5Q1 15 1 11.500Q1 8 4.500 7Z" fill="#9b9b9b" stroke="#1b1b1b" strokeWidth="1.500" />
        <circle cx="17" cy="14.500" r="6.500" fill="#d92c3a" />
        <path d="M14.700 12.200L19.300 16.800M19.300 12.200L14.700 16.800" stroke="#fff" strokeWidth="1.500" />
      </svg>

      <div className="ml-[28px] flex w-[34px] flex-col items-center leading-[23px]">
        <T w={35}>ENG</T>
        <T w={17}>IN</T>
      </div>

      <svg className="ml-[28px] h-[18px] w-[24px]" viewBox="0 0 24 18" fill="none" stroke="#1b1b1b" strokeWidth="1.600" strokeLinecap="round">
        <path d="M1 6.500Q12 -4 23 6.500M4.500 10Q12 3 19.500 10M8 13Q12 9 16 13" />
        <circle cx="12" cy="15.800" r="1.800" fill="#1b1b1b" stroke="none" />
      </svg>
      <svg className="ml-[12px] h-[20px] w-[24px]" viewBox="0 0 24 20" fill="none" stroke="#1b1b1b" strokeWidth="1.500" strokeLinecap="round">
        <path d="M1 6.500H5L10 2V18L5 13.500H1Z" strokeLinejoin="round" />
        <path d="M13.500 7Q15.500 10 13.500 13M16.500 4.500Q20.500 10 16.500 15.500" />
        <path d="M19.500 2Q26 10 19.500 18" stroke="#a9a3a1" />
      </svg>
      <svg className="-mt-[3px] ml-[12px] h-[20px] w-[25px]" viewBox="0 0 25 20">
        <path d="M9 5.500H19.500Q21.500 5.500 21.500 7.500V16.500Q21.500 18.500 19.500 18.500H3Q1 18.500 1 16.500V12" fill="none" stroke="#1b1b1b" strokeWidth="1.500" />
        <path d="M3 16.500V14L11 8V16.500ZM22 9.500H23.500Q24.500 9.500 24.500 12T23.500 14.500H22ZM5 0L0.500 8H3.500L2.500 13L8 5.500H5Z" fill="#1b1b1b" />
      </svg>

      <div className="-mt-px ml-[24px] flex w-[92px] flex-col items-end">
        <T w={43}>01:17</T>
        <T w={93}>15-04-2024</T>
      </div>

      <svg className="ml-[14px] h-[24px] w-[20px]" viewBox="0 0 20 24" fill="#0a4a9e">
        <path d="M2.500 9Q2.500 1 10 1T17.500 9V15L20 19V20H0V19L2.500 15Z" />
        <path d="M6.500 21H13.500Q12.500 23.500 10 23.500T6.500 21Z" />
      </svg>
      <div className="relative ml-[27px] h-[35px] w-[36px]">
        <svg className="h-[32px] w-[35px]" viewBox="0 0 35 32">
          <defs>
            <linearGradient id="copA" x1="0" y1="0" x2="0" y2="1"><stop offset="0" stopColor="#1a8be8" /><stop offset="0.500" stopColor="#35b6a0" /><stop offset="1" stopColor="#f3c21b" /></linearGradient>
            <linearGradient id="copB" x1="0" y1="1" x2="1" y2="0"><stop offset="0" stopColor="#f7795b" /><stop offset="0.500" stopColor="#d552c8" /><stop offset="1" stopColor="#8b5cf0" /></linearGradient>
          </defs>
          <path d="M8 3Q9 0 13 0H23Q20 1 18 7L13 23Q12 26 8 26H4Q-1 25 0.500 18Z" fill="url(#copA)" />
          <path d="M17 0H22Q25 0 26 4L28 9H21Q18 9 17 11Z" fill="#174fd0" />
          <path d="M20 12Q21 9 25 9H31Q36 10 34.500 17L31 28Q30 31 26 31H13Q16 30 17 25Z" fill="url(#copB)" />
        </svg>
        <div className="absolute top-[24px] left-[8px] flex h-[11px] w-[27px] items-center justify-center rounded-[3px] bg-[#fcc80a] text-[10px] font-bold text-black">PRE</div>
      </div>
    </div>
  );
}

export default function App() {
  return (
    <div className="relative flex h-[1080px] w-[1920px] flex-col overflow-hidden bg-[#f3f2f1] font-['Open_Sans','Noto_Sans',sans-serif]">
      <TitleBar />
      <TabBar />
      <Ribbon />
      <div className="flex h-[768px] shrink-0 bg-[#f3f2f1]">
        <QueriesPane />
        <DataGrid />
        <SettingsPane />
      </div>
      <StatusBar />
      <MergeDialog />
      <Taskbar />
    </div>
  );
}
